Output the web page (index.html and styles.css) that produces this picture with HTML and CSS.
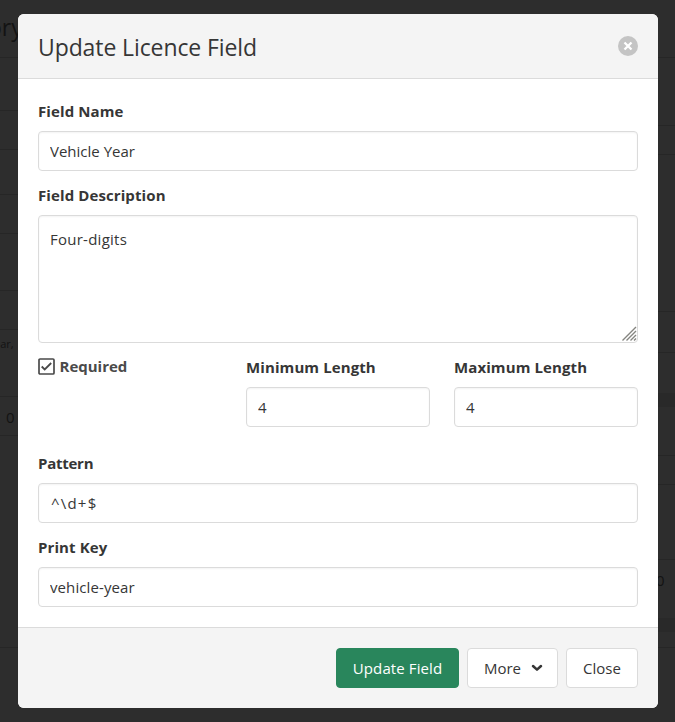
FILE: index.html
```html
<!DOCTYPE html>
<html lang="en">
<head>
<meta charset="utf-8">
<title>Update Licence Field</title>
<link rel="stylesheet" href="styles.css">
</head>
<body>
<div class="page" aria-hidden="true">
  <div class="rail rail-left">
    <div class="row h58"><span class="heading">ory</span></div>
    <div class="row h53"></div>
    <div class="row h39"></div>
    <div class="row h45"></div>
    <div class="row h39"></div>
    <div class="row h57"></div>
    <div class="row h39"></div>
    <div class="row h67"><span class="note">ear,</span></div>
    <div class="row h39"><span class="count">0</span></div>
    <div class="row h212"></div>
  </div>
  <div class="rail rail-right">
    <div class="row h58"></div>
    <div class="row h68"></div>
    <div class="row h29"></div>
    <div class="row h157"></div>
    <div class="row h41"></div>
    <div class="row h103"><div class="band"></div></div>
    <div class="row h29"></div>
    <div class="row h75"></div>
    <div class="row h88"><span class="count">0</span><div class="band"></div></div>
  </div>
</div>
<div class="modal">
  <form class="card">
    <header class="card-head">
      <h1 class="title">Update Licence Field</h1>
      <button class="delete" type="button" aria-label="Close">
        <svg width="20" height="20" viewBox="0 0 20 20"><circle cx="10" cy="10" r="10" fill="#c4c4c4"/><path d="M6.500 6.500l7 7M13.500 6.500l-7 7" stroke="#fff" stroke-width="2.300"/></svg>
      </button>
    </header>
    <section class="card-body">
      <div class="field">
        <label class="label" for="name">Field Name</label>
        <input class="input" id="name" value="Vehicle Year">
      </div>
      <div class="field">
        <label class="label" for="desc">Field Description</label>
        <div class="area-wrap">
          <textarea class="input area" id="desc">Four-digits</textarea>
          <svg class="grip" width="16" height="16" viewBox="0 0 16 16"><path d="M1.500 14.500l13.500-13.500M5.500 14.500l9.500-9.500M9.500 14.500l5.500-5.500M13 14.500l2-2" stroke="#858580" stroke-width="1.400"/></svg>
        </div>
      </div>
      <div class="columns">
        <div class="check">
          <svg width="17" height="17" viewBox="0 0 17 17"><rect x="1" y="1" width="15" height="15" rx="1" fill="#fff" stroke="#4a4a4a" stroke-width="1.700"/><path d="M3.700 8.500l3 3 6.500-6.500" fill="none" stroke="#4a4a4a" stroke-width="1.800"/></svg>
          <span>Required</span>
        </div>
        <div>
          <label class="label" for="min">Minimum Length</label>
          <input class="input" id="min" value="4">
        </div>
        <div>
          <label class="label" for="max">Maximum Length</label>
          <input class="input" id="max" value="4">
        </div>
      </div>
      <div class="field">
        <label class="label snug" for="pattern">Pattern</label>
        <input class="input pattern" id="pattern" value="^\d+$">
      </div>
      <div class="field">
        <label class="label" for="key">Print Key</label>
        <input class="input key" id="key" value="vehicle-year">
      </div>
    </section>
    <footer class="card-foot">
      <button class="button primary" type="button">Update Field</button>
      <button class="button more" type="button"><span>More</span><svg width="12" height="8" viewBox="0 0 12 8"><path d="M2 2l4 3.700 4-3.700" fill="none" stroke="#363636" stroke-width="2.500" stroke-linecap="round" stroke-linejoin="round"/></svg></button>
      <button class="button close" type="button">Close</button>
    </footer>
  </form>
</div>
</body>
</html>
```
FILE: styles.css
```css
* { box-sizing: border-box; }
body {
  margin: 0;
  height: 722px;
  overflow: hidden;
  background: #2d2d2d;
  color: #363636;
  font-family: "Open Sans", "Noto Sans", sans-serif;
  font-size: 15px;
  line-height: 24px;
}
.page { display: flex; justify-content: space-between; height: 722px; }
.rail { width: 18px; overflow: hidden; color: #131313; }
.rail-right { width: 17px; }
.row { display: flex; flex-direction: column; border-bottom: 1px solid #262626; }
.h29 { height: 29px; } .h39 { height: 39px; } .h41 { height: 41px; }
.h45 { height: 45px; } .h53 { height: 53px; } .h57 { height: 57px; }
.h58 { height: 58px; } .h67 { height: 67px; } .h68 { height: 68px; }
.h75 { height: 75px; } .h88 { height: 88px; } .h103 { height: 103px; }
.h157 { height: 157px; } .h212 { height: 212px; }
.heading { font-size: 23px; line-height: 32px; margin: 11px 0 0 -12px; }
.note { font-size: 11px; line-height: 18px; margin: 5px 0 0 -6px; }
.count { margin: 8px 0 0 6px; }
.rail-right .count { margin-left: -2px; }
.band { height: 14px; margin: 40px 0 0; background: #292929; }
.count + .band { margin-top: 26px; }

/* The dialog lies over the dimmed page. */
.modal { position: absolute; inset: 0; padding: 14px 17px 14px 18px; }
.card { display: flex; flex-direction: column; height: 694px; margin: 0; border-radius: 6px; overflow: hidden; background: #fff; }
.card-head { display: flex; flex: none; align-items: center; justify-content: space-between; height: 65px; padding: 0 20px; background: #f4f4f4; border-bottom: 1px solid #dbdbdb; }
.title { margin: 2px 0 0; font-size: 23px; font-weight: 400; line-height: 24px; letter-spacing: -.1px; }
.delete { display: flex; padding: 0; border: 0; background: none; }
.card-body { flex: 1; min-height: 0; padding: 20px; }
.field { margin-bottom: 12px; }
.label { display: block; margin-bottom: 8px; font-weight: 700; letter-spacing: .1px; }
.snug { letter-spacing: -.25px; }
.input { display: block; width: 100%; height: 40px; padding: 0 11px; border: 1px solid #dbdbdb; border-radius: 4px; background: #fff; box-shadow: inset 0 1px 2px rgba(10, 10, 10, .05); color: #363636; font: inherit; outline: 0; }
.area-wrap { position: relative; }
.area { height: 128px; padding: 11px; resize: none; letter-spacing: .25px; }
.pattern { padding-left: 12px; letter-spacing: 1.2px; }
.key { letter-spacing: .1px; }
.grip { position: absolute; right: 1px; bottom: 1px; }
.columns { display: grid; grid-template-columns: repeat(3, 1fr); gap: 24px; margin-bottom: 24px; }
.check { display: flex; align-items: center; gap: 4.500px; height: 22px; color: #4a4a4a; font-weight: 700; }
.card-foot { display: flex; flex: none; justify-content: flex-end; gap: 8px; height: 81px; padding: 20px; background: #f4f4f4; border-top: 1px solid #dbdbdb; }
.button { display: flex; align-items: center; justify-content: center; height: 40px; padding: 0; border: 1px solid #dbdbdb; border-radius: 4px; background: #fff; color: #363636; font: inherit; white-space: nowrap; }
.primary { width: 123px; border-color: #29865c; background: #29865c; color: #fff; letter-spacing: .1px; }
.more { width: 91px; gap: 10px; padding-left: 2px; }
.close { width: 72px; }
```
